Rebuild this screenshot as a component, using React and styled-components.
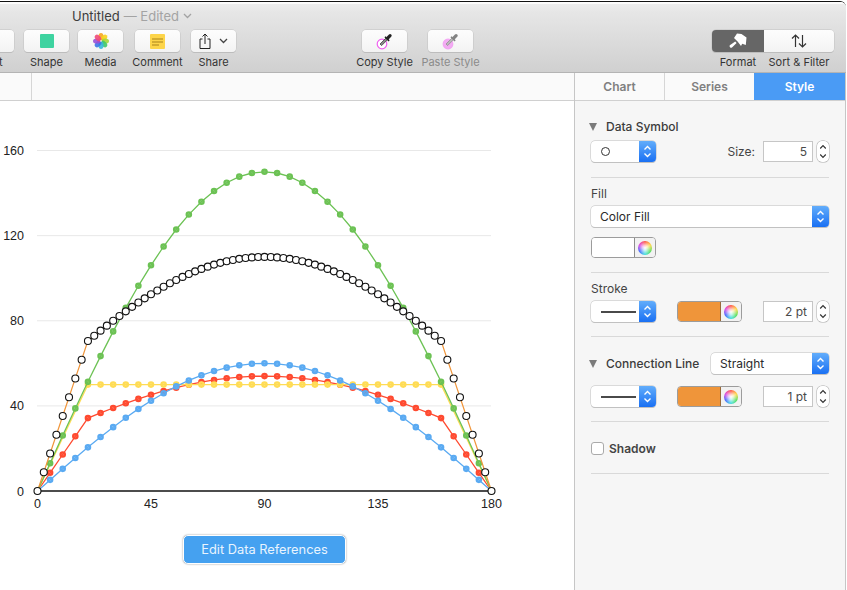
import React from 'react';
import styled, { createGlobalStyle } from 'styled-components';

const UI_FONT = '"Inter", "Liberation Sans", sans-serif';

const GlobalStyle = createGlobalStyle`
  html, body {
    margin: 0;
    padding: 0;
    background: #fff;
    overflow: hidden;
  }
  * {
    box-sizing: border-box;
  }
`;

const Page = styled.div`
  width: 847px;
  height: 590px;
  overflow: hidden;
  padding-top: 1px;
  font-family: ${UI_FONT};
`;

const Window = styled.div`
  width: 846px;
  height: 589px;
  display: flex;
  flex-direction: column;
  overflow: hidden;
  border-top: 1px solid #111;
  border-top-right-radius: 6px;
  background: #fff;
`;

const Toolbar = styled.header`
  height: 71px;
  flex: none;
  background: linear-gradient(#ececec 0, #e6e6e6 12%, #d0d0d0 100%);
  border-top: 2px solid #fbfbfb;
  border-bottom: 1px solid #b4b4b4;
  overflow: hidden;
`;

const TitleRow = styled.div`
  height: 24px;
  display: flex;
  align-items: center;
  gap: 4px;
  padding-left: 72px;
  font-size: 13px;
  color: #3d3d3d;
`;

const Edited = styled.span`
  color: #a3a3a3;
`;

const ToolRow = styled.div`
  display: flex;
  margin-left: -31px;
  padding-top: 2px;
`;

const ToolItem = styled.div`
  width: ${p => p.$w || 45}px;
  margin-left: ${p => p.$ml || 0}px;
  flex: none;
  display: flex;
  flex-direction: column;
  align-items: center;
`;

const ToolButton = styled.div`
  width: 100%;
  height: 22px;
  display: flex;
  align-items: center;
  justify-content: center;
  gap: ${p => p.$gap || 0}px;
  background: linear-gradient(#fdfdfd, #f3f3f3);
  border-radius: 4px;
  box-shadow: 0 0 0 0.5px #c2c2c2, 0 1px 0 #b8b8b8;
`;

const ToolLabel = styled.span`
  margin-top: 3px;
  font-size: 11px;
  line-height: 14px;
  white-space: nowrap;
  color: ${p => (p.$muted ? '#8b8b8b' : '#333')};
`;

const Segments = styled.div`
  width: 122px;
  height: 22px;
  display: flex;
  border-radius: 4px;
  overflow: hidden;
  box-shadow: 0 0 0 0.5px #c2c2c2, 0 1px 0 #b8b8b8;
`;

const Segment = styled.div`
  width: ${p => p.$w}px;
  display: flex;
  align-items: center;
  justify-content: center;
  background: ${p => (p.$active ? '#666' : 'linear-gradient(#fdfdfd, #f3f3f3)')};
`;

const SegmentLabels = styled.div`
  width: 122px;
  display: flex;
`;

const SegmentLabel = styled.div`
  width: ${p => p.$w}px;
  display: flex;
  justify-content: center;
`;

const Body = styled.div`
  flex: 1;
  display: flex;
  min-height: 0;
`;

const Main = styled.main`
  width: 574px;
  flex: none;
  display: flex;
  flex-direction: column;
  background: #fff;
`;

const Ruler = styled.div`
  height: 28px;
  flex: none;
  background: #fafafa;
  border-bottom: 1px solid #d0d0d0;
  display: flex;
`;

const RulerCell = styled.div`
  width: 32px;
  border-right: 1px solid #d6d6d6;
`;

const ChartSvg = styled.svg`
  display: block;
  flex: none;
`;

const EditButton = styled.button`
  width: 163px;
  height: 29px;
  margin: 14px 0 0 183px;
  padding: 0;
  background: #45a1f0;
  border: 1px solid #fff;
  border-radius: 5px;
  box-shadow: 0 0 2px rgba(0, 0, 0, 0.45);
  color: #e9f4fe;
  font-family: ${UI_FONT};
  font-size: 12.8px;
`;

const Sidebar = styled.aside`
  flex: 1;
  display: flex;
  flex-direction: column;
  background: #f6f6f6;
  border-left: 1px solid #c6c6c6;
  border-right: 1px solid #c6c6c6;
`;

const Tabs = styled.nav`
  height: 28px;
  flex: none;
  display: flex;
  background: #fafafa;
  border-bottom: 1px solid #d0d0d0;
`;

const Tab = styled.div`
  width: ${p => p.$w}px;
  display: flex;
  align-items: center;
  justify-content: center;
  font-size: 12px;
  font-weight: 600;
  color: ${p => (p.$active ? '#fff' : '#808080')};
  background: ${p => (p.$active ? '#4a9bf5' : 'transparent')};
  border-right: ${p => (p.$divider ? '1px solid #d6d6d6' : 'none')};
`;

const Panel = styled.div`
  padding: 0 16px;
`;

const Section = styled.section`
  display: flex;
  flex-direction: column;
  gap: ${p => p.$gap || 6}px;
  padding: ${p => p.$pt}px 0 ${p => p.$pb}px;
  border-bottom: 1px solid #d9d9d9;
`;

const Row = styled.div`
  display: flex;
  align-items: center;
  gap: ${p => p.$gap || 0}px;
  justify-content: ${p => (p.$spread ? 'space-between' : 'flex-start')};
`;

const WellRow = styled(Row)`
  margin-top: 5px;
`;

const Triangle = styled.span`
  width: 0;
  height: 0;
  margin-left: -2px;
  margin-right: 9px;
  border-left: 4.5px solid transparent;
  border-right: 4.5px solid transparent;
  border-top: 8px solid #7b7b7b;
`;

const Heading = styled.span`
  font-size: 12px;
  font-weight: 500;
  line-height: 16px;
  color: #3c3c3c;
`;

const Label = styled.span`
  font-size: 12px;
  line-height: 15px;
  color: #444;
`;

const ShadowLabel = styled.span`
  font-size: 12px;
  font-weight: 600;
  color: #444;
`;

const Popup = styled.div`
  width: ${p => p.$w}px;
  height: 21px;
  flex: none;
  display: flex;
  align-items: center;
  justify-content: space-between;
  background: #fff;
  border-radius: 4px;
  box-shadow: 0 0 0 0.5px #bdbdbd, 0 1px 0 #c4c4c4;
  overflow: hidden;
  font-size: 12px;
  color: #2a2a2a;
`;

const PopupValue = styled.span`
  padding-left: 9px;
  display: flex;
  align-items: center;
`;

const PopupArrows = styled.span`
  width: 17px;
  height: 100%;
  flex: none;
  display: flex;
  align-items: center;
  justify-content: center;
  background: linear-gradient(#62adfb, #1a70f3);
`;

const SymbolDot = styled.span`
  width: 9px;
  height: 9px;
  margin-left: 1px;
  border: 1px solid #333;
  border-radius: 50%;
`;

const LineSample = styled.span`
  width: 35px;
  height: 2px;
  margin-left: 1px;
  background: #4a4a4a;
`;

const Well = styled.div`
  width: 65px;
  height: 21px;
  flex: none;
  display: flex;
  border: 1px solid #9c9c9c;
  border-radius: 4px;
  overflow: hidden;
  background: #fff;
`;

const WellColor = styled.span`
  flex: 1;
  background: ${p => p.$color};
  border-right: 1px solid ${p => (p.$color === '#fff' ? '#8c8c8c' : '#9a6a3a')};
`;

const WellWheel = styled.span`
  width: 20px;
  display: flex;
  align-items: center;
  justify-content: center;
  background: #f2f2f2;
`;

const Wheel = styled.span`
  width: 14px;
  height: 14px;
  border-radius: 50%;
  background:
    radial-gradient(circle, #fff 0, rgba(255, 255, 255, 0.7) 25%, rgba(255, 255, 255, 0) 65%),
    conic-gradient(#ff5a4a, #ffd84a, #5de05d, #4ae0e0, #4a6cff, #e04ae0, #ff5a4a);
`;

const Field = styled.div`
  width: 50px;
  height: 21px;
  flex: none;
  display: flex;
  align-items: center;
  justify-content: flex-end;
  padding-right: 5px;
  background: #fff;
  border: 1px solid #c6c6c6;
  font-size: 12px;
  color: #4a4a4a;
`;

const Stepper = styled.div`
  width: 12px;
  height: 21px;
  flex: none;
  display: flex;
  align-items: center;
  justify-content: center;
  background: #fff;
  border-radius: 5px;
  box-shadow: 0 0 0 0.5px #aaa;
`;

const FieldGroup = styled.div`
  display: flex;
  align-items: center;
  gap: 4px;
  margin-left: ${p => (p.$auto ? 'auto' : '0')};
`;

const SizeLabel = styled(Label)`
  margin-right: 4px;
`;

const Checkbox = styled.span`
  width: 13px;
  height: 13px;
  background: #fff;
  border: 1px solid #aaa;
  border-radius: 3px;
`;

const range = (step, to = 180) => {
  const out = [];
  for (let x = 0; x <= to; x += step) out.push(x);
  return out;
};

const sin = x => Math.sin((x * Math.PI) / 180);

// the shoulders of these curves are straight ramps up to 20 and down from 160
const ramped = (x, fn) => {
  if (x < 20) return (fn(20) * x) / 20;
  if (x > 160) return (fn(20) * (180 - x)) / 20;
  return fn(x);
};

const SERIES = [
  { color: '#ff4a30', step: 5, fn: x => ramped(x, v => 24 + 30 * sin(v)) },
  { color: '#ffdc55', step: 5, fn: x => ramped(x, () => 50), from: 20, to: 160 },
  { color: '#5aaaf2', step: 5, fn: x => 60 * sin(x) },
  { color: '#6cc254', step: 5, fn: x => 150 * sin(x) },
];

const BLACK = x => ramped(x, v => 50 + 60 * sin(v));

const px = x => 37.5 + (x * 454) / 180;
const py = y => 390 - y * 2.128;
const toPath = (points, fn) => points.map(x => `${px(x).toFixed(1)},${py(fn(x)).toFixed(1)}`).join(' ');

const Chart = () => (
  <ChartSvg width="574" height="420" viewBox="0 0 574 420" fontFamily="Liberation Sans, sans-serif" fontSize="12.5">
    {[160, 120, 80, 40].map(v => (
      <line key={v} x1="37" x2="491" y1={py(v)} y2={py(v)} stroke="#e8e8e8" />
    ))}
    {[160, 120, 80, 40, 0].map(v => (
      <text key={v} x="24" y={py(v) + 4.5} textAnchor="end" fill="#222">{v}</text>
    ))}
    {[0, 45, 90, 135, 180].map(v => (
      <text key={v} x={px(v)} y="407" textAnchor="middle" fill="#222">{v}</text>
    ))}
    <line x1="37" x2="491" y1="390" y2="390" stroke="#111" strokeWidth="1.5" />
    {SERIES.map(s => (
      <g key={s.color}>
        <polyline points={toPath(range(s.step), s.fn)} fill="none" stroke={s.color} strokeWidth="1.3" />
        {range(s.step).filter(x => x >= (s.from ?? 0) && x <= (s.to ?? 180)).map(x => (
          <circle key={x} cx={px(x)} cy={py(s.fn(x))} r="2.2" fill={s.color} fillOpacity="0.65" stroke={s.color} strokeWidth="2.2" />
        ))}
      </g>
    ))}
    <polyline points={toPath(range(2.5), BLACK)} fill="none" stroke="#f0953a" strokeWidth="1.2" />
    {range(2.5).map(x => (
      <circle key={x} cx={px(x)} cy={py(BLACK(x))} r="3.5" fill="#fff" stroke="#111" strokeWidth="1.1" />
    ))}
  </ChartSvg>
);

const PopupChevrons = () => (
  <svg width="9" height="13" viewBox="0 0 9 13" fill="none" stroke="#fff" strokeWidth="1.4">
    <path d="M1.5 4.5 4.5 1.5 7.5 4.5M1.5 8.5 4.5 11.5 7.5 8.5" />
  </svg>
);

const StepperChevrons = () => (
  <svg width="8" height="15" viewBox="0 0 8 15" fill="none" stroke="#333" strokeWidth="1.2">
    <path d="M1.2 4.5 4 1.7 6.8 4.5M1.2 10.5 4 13.3 6.8 10.5" />
  </svg>
);

const Chevron = ({ color = '#444' }) => (
  <svg width="9" height="6" viewBox="0 0 9 6" fill="none" stroke={color} strokeWidth="1.3">
    <path d="M1 1 4.5 4.5 8 1" />
  </svg>
);

const ShapeIcon = () => (
  <svg width="14" height="14" viewBox="0 0 14 14">
    <rect width="14" height="14" rx="1" fill="#3ed3a0" />
  </svg>
);

const PETALS = ['#f5a623', '#f8d21c', '#a5d63a', '#3fc86a', '#37b8d8', '#3b74e8', '#9a4fd6', '#ef4a78'];

const MediaIcon = () => (
  <svg width="16" height="16" viewBox="0 0 16 16">
    {PETALS.map((c, i) => (
      <ellipse key={c} cx="8" cy="3.8" rx="2.6" ry="3.8" fill={c} fillOpacity="0.9" transform={`rotate(${i * 45} 8 8)`} />
    ))}
    <circle cx="8" cy="8" r="0.8" fill="#fff" />
  </svg>
);

const NoteIcon = () => (
  <svg width="15" height="15" viewBox="0 0 15 15">
    <rect width="15" height="15" rx="1" fill="#fdd54a" />
    <path d="M2 5h11M2 8h11M2 11h7" stroke="#a9831a" strokeWidth="1" />
  </svg>
);

const ShareIcon = () => (
  <svg width="12" height="16" viewBox="0 0 12 16" fill="none" stroke="#222" strokeWidth="1">
    <path d="M3.5 6H1v9.5h10V6H8.5M6 11V1M3.5 3.5 6 1l2.5 2.5" />
  </svg>
);

const DropperIcon = ({ faded }) => (
  <svg width="18" height="18" viewBox="0 0 18 18" opacity={faded ? 0.55 : 1}>
    <circle cx="6" cy="12" r="4.8" fill={faded ? '#f070f0' : '#fff'} stroke="#f060f0" strokeWidth="1.2" />
    <path d="M5 13 11 7l1.6 1.6-6 6z" transform="translate(-1 -1)" fill="#888" stroke="#333" strokeWidth="0.7" />
    <path d="M10 5.6 13 2.6a1.5 1.5 0 0 1 2.2 2.2L12.3 7.8z" fill="#222" />
    <path d="M9 4.8 13.1 8.9" stroke="#222" strokeWidth="1.6" />
  </svg>
);

const BrushIcon = () => (
  <svg width="20" height="16" viewBox="0 0 20 16" fill="#fff">
    <path d="M6 5 9 .5l4.5.5 5 3.5-.7 7.5-3.6-1.2-1.2 2.2-3.2-4.3z" />
    <path d="M7.2 8.4 8.6 10 4 14.4a1.6 1.6 0 0 1-2.2-2.2z" />
  </svg>
);

const SortIcon = () => (
  <svg width="16" height="14" viewBox="0 0 16 14" fill="none" stroke="#333" strokeWidth="1.2">
    <path d="M4.5 13V1M1 4.5 4.5 1 8 4.5M11.5 1v12M8 9.5l3.5 3.5L15 9.5" />
  </svg>
);

const Arrows = () => (
  <PopupArrows>
    <PopupChevrons />
  </PopupArrows>
);

const LinePopup = () => (
  <Popup $w={65}>
    <PopupValue><LineSample /></PopupValue>
    <Arrows />
  </Popup>
);

const ColorWell = ({ color }) => (
  <Well>
    <WellColor $color={color} />
    <WellWheel><Wheel /></WellWheel>
  </Well>
);

const NumberInput = ({ value, auto, label }) => (
  <FieldGroup $auto={auto}>
    {label && <SizeLabel>{label}</SizeLabel>}
    <Field>{value}</Field>
    <Stepper><StepperChevrons /></Stepper>
  </FieldGroup>
);

const App = () => (
  <Page>
    <GlobalStyle />
    <Window>
      <Toolbar>
        <TitleRow>
          <span>Untitled</span>
          <Edited>— Edited</Edited>
          <Chevron color="#a3a3a3" />
        </TitleRow>
        <ToolRow>
          <ToolItem>
            <ToolButton />
            <ToolLabel>Text</ToolLabel>
          </ToolItem>
          <ToolItem $ml={10}>
            <ToolButton><ShapeIcon /></ToolButton>
            <ToolLabel>Shape</ToolLabel>
          </ToolItem>
          <ToolItem $ml={9}>
            <ToolButton><MediaIcon /></ToolButton>
            <ToolLabel>Media</ToolLabel>
          </ToolItem>
          <ToolItem $ml={12}>
            <ToolButton><NoteIcon /></ToolButton>
            <ToolLabel>Comment</ToolLabel>
          </ToolItem>
          <ToolItem $ml={11}>
            <ToolButton $gap={8}><ShareIcon /><Chevron /></ToolButton>
            <ToolLabel>Share</ToolLabel>
          </ToolItem>
          <ToolItem $ml={126}>
            <ToolButton><DropperIcon /></ToolButton>
            <ToolLabel>Copy Style</ToolLabel>
          </ToolItem>
          <ToolItem $ml={21}>
            <ToolButton><DropperIcon faded /></ToolButton>
            <ToolLabel $muted>Paste Style</ToolLabel>
          </ToolItem>
          <ToolItem $w={122} $ml={239}>
            <Segments>
              <Segment $w={52} $active><BrushIcon /></Segment>
              <Segment $w={70}><SortIcon /></Segment>
            </Segments>
            <SegmentLabels>
              <SegmentLabel $w={52}><ToolLabel>Format</ToolLabel></SegmentLabel>
              <SegmentLabel $w={70}><ToolLabel>Sort &amp; Filter</ToolLabel></SegmentLabel>
            </SegmentLabels>
          </ToolItem>
        </ToolRow>
      </Toolbar>
      <Body>
        <Main>
          <Ruler><RulerCell /></Ruler>
          <Chart />
          <EditButton>Edit Data References</EditButton>
        </Main>
        <Sidebar>
          <Tabs>
            <Tab $w={90} $divider>Chart</Tab>
            <Tab $w={89}>Series</Tab>
            <Tab $w={91} $active>Style</Tab>
          </Tabs>
          <Panel>
            <Section $pt={18} $pb={15}>
              <Row>
                <Triangle />
                <Heading>Data Symbol</Heading>
              </Row>
              <Row>
                <Popup $w={65}>
                  <PopupValue><SymbolDot /></PopupValue>
                  <Arrows />
                </Popup>
                <NumberInput auto label="Size:" value="5" />
              </Row>
            </Section>
            <Section $pt={8} $pb={14} $gap={5}>
              <Label>Fill</Label>
              <Popup $w={238}>
                <PopupValue>Color Fill</PopupValue>
                <Arrows />
              </Popup>
              <WellRow>
                <ColorWell color="#fff" />
              </WellRow>
            </Section>
            <Section $pt={8} $pb={14} $gap={5}>
              <Label>Stroke</Label>
              <Row $gap={21}>
                <LinePopup />
                <ColorWell color="#ef953a" />
                <NumberInput value="2 pt" />
              </Row>
            </Section>
            <Section $pt={16} $pb={14} $gap={12}>
              <Row $spread>
                <Row>
                  <Triangle />
                  <Heading>Connection Line</Heading>
                </Row>
                <Popup $w={118}>
                  <PopupValue>Straight</PopupValue>
                  <Arrows />
                </Popup>
              </Row>
              <Row $gap={21}>
                <LinePopup />
                <ColorWell color="#ef953a" />
                <NumberInput value="1 pt" />
              </Row>
            </Section>
            <Section $pt={19} $pb={17}>
              <Row $gap={5}>
                <Checkbox />
                <ShadowLabel>Shadow</ShadowLabel>
              </Row>
            </Section>
          </Panel>
        </Sidebar>
      </Body>
    </Window>
  </Page>
);

export default App;
